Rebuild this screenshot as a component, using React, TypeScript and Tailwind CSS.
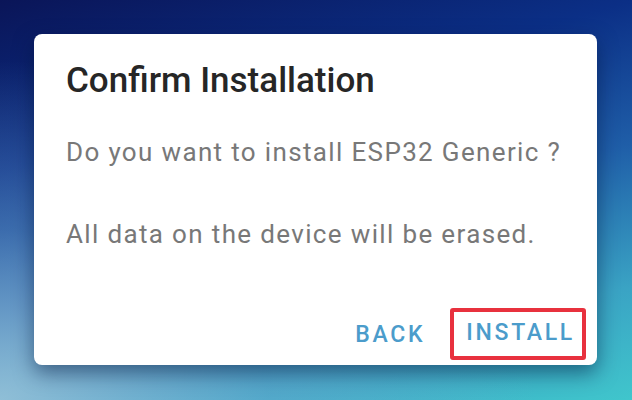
export default function App() {
  return (
    <div className="relative h-[400px] w-[632px] overflow-hidden bg-[linear-gradient(165deg,#0a1558_0%,#0b2f86_30%,#1f5ea8_55%,#3aa3c4_80%,#40c6cc_100%)] font-['Roboto',sans-serif]">
      <div className="pointer-events-none absolute inset-0 bg-[radial-gradient(ellipse_at_0%_100%,rgba(160,200,220,0.85)_0%,rgba(120,170,210,0.4)_30%,rgba(80,120,190,0)_60%)]" />
      <div className="relative pl-[34px] pt-[34px]">
        <div className="flex h-[331px] w-[563px] flex-col rounded-[8px] bg-white shadow-[0_8px_20px_rgba(0,20,60,0.5)]">
          <h1 className="pl-[32px] pt-[27px] text-[35px] font-medium leading-[40px] text-[#262626]">
            Confirm Installation
          </h1>
          <p className="pl-[32px] pt-[36px] text-[26px] leading-[30px] tracking-[1.35px] text-[#787878]">
            Do you want to install ESP32 Generic ?
          </p>
          <p className="pl-[32px] pt-[52px] text-[26px] leading-[30px] tracking-[1.35px] text-[#787878]">
            All data on the device will be erased.
          </p>
          <div className="mt-auto flex items-center justify-end gap-[25px] pb-[5px] pr-[11px]">
            <button className="text-[23px] font-medium leading-[27px] tracking-[2.7px] text-[#4b9ccb]">BACK</button>
            <button className="rounded-[3px] border-[4px] border-[#e8313e] pb-[10px] pl-[12px] pr-[7px] pt-[7px] text-[23px] font-medium leading-[27px] tracking-[2.7px] text-[#4b9ccb]">
              INSTALL
            </button>
          </div>
        </div>
      </div>
    </div>
  );
}
